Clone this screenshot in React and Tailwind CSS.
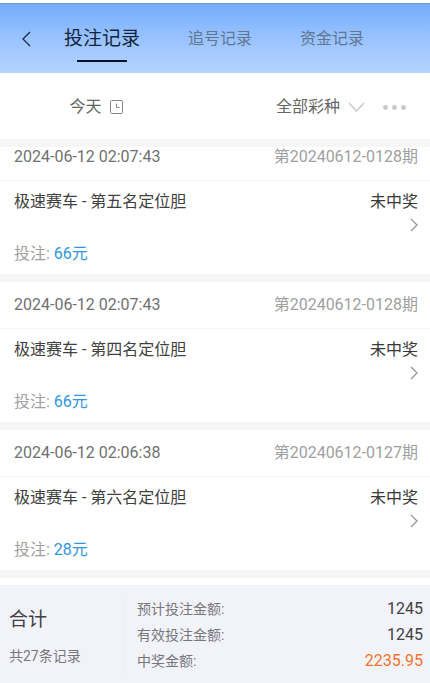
import React, { useState } from 'react';

const tabs = ['投注记录', '追号记录', '资金记录'];

const records = [
  { time: '2024-06-12 02:07:43', issue: '第20240612-0128期', game: '极速赛车 - 第五名定位胆', status: '未中奖', amount: '66元' },
  { time: '2024-06-12 02:07:43', issue: '第20240612-0128期', game: '极速赛车 - 第四名定位胆', status: '未中奖', amount: '66元' },
  { time: '2024-06-12 02:06:38', issue: '第20240612-0127期', game: '极速赛车 - 第六名定位胆', status: '未中奖', amount: '28元' }
];

const totals = [
  { label: '预计投注金额:', value: '1245', color: 'text-[#404045]' },
  { label: '有效投注金额:', value: '1245', color: 'text-[#404045]' },
  { label: '中奖金额:', value: '2235.95', color: 'text-[#f27328]' }
];

const Header = () => {
  const [active, setActive] = useState(0);

  return (
    <header className="mt-[3px] flex h-[70px] items-center border-t border-[#6f9dd2] bg-linear-to-b from-[#73adfb] via-[#99c3ff] to-[#b4d4ff] pl-5">
      <button type="button" aria-label="返回" className="flex w-3 justify-center text-[#1c2c44]">
        <svg width="10" height="16" viewBox="0 0 10 16" fill="none" stroke="currentColor" strokeWidth="1.3">
          <path d="M9 1 2 8l7 7" />
        </svg>
      </button>
      <nav className="ml-8 flex items-center gap-12">
        {tabs.map((tab, index) => (
          <button
            key={tab}
            type="button"
            onClick={() => setActive(index)}
            className={index === active ? 'relative text-[19px] leading-7 text-[#14243c]' : 'text-base leading-7 text-[#61758f]'}
          >
            {tab}
            {index === active && (
              <span className="absolute -bottom-[9px] left-1/2 h-0.5 w-[50px] -translate-x-1/2 bg-[#06101e]"></span>
            )}
          </button>
        ))}
      </nav>
    </header>
  );
};

const Filters = () => (
  <div className="flex h-[66px] items-center pt-0.5 text-base text-[#666666]">
    <button type="button" className="flex flex-1 items-center justify-center gap-2 pr-[22px]">
      今天
      <svg width="13" height="14" viewBox="0 0 13 14" fill="none" stroke="#838383">
        <rect x="0.5" y="0.5" width="12" height="13" rx="1" />
        <path d="M6.500 3.500v4h3" />
      </svg>
    </button>
    <div className="flex flex-1 items-center justify-end pr-6">
      <button type="button" className="flex items-center gap-2">
        全部彩种
        <svg width="17" height="10" viewBox="0 0 17 10" fill="none" stroke="#c4c4c4" strokeWidth="1.2">
          <path d="m1 1 7.500 8L16 1" />
        </svg>
      </button>
      <button type="button" aria-label="更多" className="ml-[18px]">
        <svg width="23" height="5" viewBox="0 0 23 5" fill="#c8c8c8">
          <circle cx="2.500" cy="2.500" r="2.400" />
          <circle cx="11.500" cy="2.500" r="2.400" />
          <circle cx="20.500" cy="2.500" r="2.400" />
        </svg>
      </button>
    </div>
  </div>
);

const RecordCard = ({ record }) => (
  <li className="border-b-8 border-[#f6f6f6]">
    <div className="flex h-[47px] items-center justify-between border-b border-[#f5f5f5] pr-3 pl-3.5">
      <time className="text-[#707070]">{record.time}</time>
      <span className="text-[#a0a0a0]">{record.issue}</span>
    </div>
    <div className="flex h-[93px] justify-between pt-[9px] pr-3 pl-3.5">
      <div className="flex flex-col justify-between pb-2">
        <h2 className="text-[#404040]">{record.game}</h2>
        <p className="text-[#a0a0a0]">
          投注: <span className="text-[#2f97da]">{record.amount}</span>
        </p>
      </div>
      <div className="flex flex-col items-end">
        <span className="text-[#383838]">{record.status}</span>
        <button type="button" aria-label="查看详情" className="mt-1">
          <svg width="8" height="14" viewBox="0 0 8 14" fill="none" stroke="#949494" strokeWidth="1.3">
            <path d="m1 1 6 6-6 6" />
          </svg>
        </button>
      </div>
    </div>
  </li>
);

const Summary = () => (
  <footer className="mt-[7px] flex bg-[#f2f3f9] pt-[11px] pr-[7px] pb-[9px]">
    <div className="flex w-[125px] flex-col justify-center gap-3.5 border-r border-[#edeef3] pt-1 pl-[9px]">
      <strong className="text-[19px] leading-6 font-normal text-[#404045]">合计</strong>
      <span className="text-sm text-[#76777c]">共27条记录</span>
    </div>
    <dl className="flex-1 pl-3">
      {totals.map((item) => (
        <div key={item.label} className="flex h-[26px] items-center justify-between">
          <dt className="text-sm text-[#76777c]">{item.label}</dt>
          <dd className={item.color}>{item.value}</dd>
        </div>
      ))}
    </dl>
  </footer>
);

const App = () => {
  return (
    <div lang="zh-CN" className="flow-root bg-white font-['Roboto','Noto_Sans_CJK_SC',sans-serif] text-base">
      <Header />
      <Filters />
      {/* The list is scrolled a little below the filter bar */}
      <main className="overflow-hidden border-t-8 border-[#f6f6f6]">
        <ul className="-mt-[13px]">
          {records.map((record, index) => (
            <RecordCard key={index} record={record} />
          ))}
        </ul>
      </main>
      <Summary />
    </div>
  );
};

export default App;
